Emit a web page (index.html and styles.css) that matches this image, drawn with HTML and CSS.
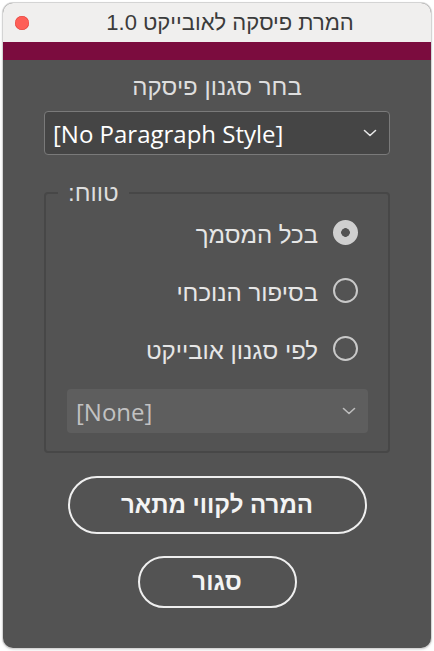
FILE: index.html
```html
<!DOCTYPE html>
<html lang="he" dir="rtl">
<head>
<meta charset="utf-8">
<title>המרת פיסקה לאובייקט 1.0</title>
<link rel="stylesheet" href="styles.css">
</head>
<body>
<div class="window">
  <div class="titlebar">
    <div class="lights"><span class="close"></span></div>
    <div class="title">המרת פיסקה לאובייקט 1.0</div>
  </div>
  <div class="accent"></div>
  <div class="content">
    <div class="heading">בחר סגנון פיסקה</div>
    <div class="select main-select">
      <span class="select-text">[No Paragraph Style]</span>
      <svg class="chev" width="14" height="8" viewBox="0 0 14 8"><path d="M1.5 1.5 L7 6.5 L12.5 1.5" fill="none" stroke="#e6e6e6" stroke-width="1.6" stroke-linecap="round" stroke-linejoin="round"/></svg>
    </div>
    <fieldset class="group">
      <legend class="legend">טווח:</legend>
      <div class="group-body">
        <label class="radio-row"><span class="radio checked"></span><span class="radio-label">בכל המסמך</span></label>
        <label class="radio-row"><span class="radio"></span><span class="radio-label">בסיפור הנוכחי</span></label>
        <label class="radio-row"><span class="radio"></span><span class="radio-label">לפי סגנון אובייקט</span></label>
        <div class="select sub-select">
          <span class="select-text">[None]</span>
          <svg class="chev" width="14" height="8" viewBox="0 0 14 8"><path d="M1.5 1.5 L7 6.5 L12.5 1.5" fill="none" stroke="#bdbdbd" stroke-width="1.6" stroke-linecap="round" stroke-linejoin="round"/></svg>
        </div>
      </div>
    </fieldset>
    <div class="buttons">
      <button class="btn btn-wide">המרה לקווי מתאר</button>
      <button class="btn btn-small">סגור</button>
    </div>
  </div>
</div>
</body>
</html>
```

FILE: styles.css
```css
html, body {
  margin: 0;
  padding: 0;
  background: #ffffff;
}

body {
  font-family: "Liberation Sans", "DejaVu Sans", sans-serif;
  width: 434px;
  height: 651px;
  overflow: hidden;
}

.window {
  margin: 3px;
  width: 428px;
  height: 645px;
  border-radius: 10px;
  overflow: hidden;
  background: #535353;
  display: flex;
  flex-direction: column;
  box-shadow: 0 0 0 1px #d4d4d4, 0 1px 3px rgba(0,0,0,0.25);
}

.titlebar {
  direction: ltr;
  height: 39px;
  background: #f0efee;
  display: grid;
  grid-template-columns: 26px 1fr;
  align-items: center;
}

.lights {
  display: flex;
  align-items: center;
  padding-left: 12px;
}

.close {
  flex: none;
  width: 14px;
  height: 14px;
  border-radius: 50%;
  background: #fe5f57;
  box-shadow: inset 0 0 0 0.5px #e0443e;
}

.title {
  direction: rtl;
  text-align: center;
  font-size: 22px;
  color: #3b3b3b;
  padding-top: 1px;
}

.accent {
  height: 18px;
  background: #7b0c3e;
}

.content {
  padding: 15px 41px 0;
  display: flex;
  flex-direction: column;
}

.heading {
  text-align: center;
  font-size: 24px;
  line-height: 24px;
  color: #dedede;
}

.select {
  direction: ltr;
  display: flex;
  align-items: center;
  justify-content: space-between;
  box-sizing: border-box;
  height: 44px;
  border-radius: 4px;
}

.main-select {
  margin-top: 12px;
  background: #454545;
  border: 1.5px solid #7a7a7a;
  padding: 0 12px 0 8px;
}

.select-text {
  font-family: "Open Sans", "Liberation Sans", sans-serif;
  font-size: 24px;
  color: #ffffff;
}

.group {
  direction: ltr;
  margin: 28px 0 0;
  padding: 0;
  border: 2px solid #474747;
  border-radius: 4px;
}

.legend {
  direction: rtl;
  margin-left: 12px;
  padding: 0 10px;
  font-size: 24px;
  line-height: 20px;
  color: #dedede;
}

.group-body {
  direction: rtl;
  display: flex;
  flex-direction: column;
  padding: 0 0 18px;
}

.radio-row {
  display: flex;
  align-items: center;
  gap: 15px;
  height: 58px;
  padding-right: 30px;
}

.radio {
  box-sizing: border-box;
  width: 25px;
  height: 25px;
  border-radius: 50%;
  border: 2px solid #c9c9c9;
  flex: none;
}

.radio.checked {
  background: radial-gradient(circle, #535353 0 4px, #cfcfcf 4.6px);
  border-color: #cfcfcf;
}

.radio-label {
  font-size: 24px;
  color: #e6e6e6;
  padding-top: 5px;
}

.sub-select {
  margin: 12px 20px 0 21px;
  background: #5e5e5e;
  padding: 0 12px 0 9px;
}

.sub-select .select-text {
  color: #c2c2c2;
}

.buttons {
  display: flex;
  flex-direction: column;
  align-items: center;
  gap: 22px;
  margin-top: 23px;
}

.btn {
  font-family: "Liberation Sans", "DejaVu Sans", sans-serif;
  font-size: 24px;
  font-weight: bold;
  color: #f4f4f4;
  background: transparent;
  border: 2px solid #efefef;
  border-radius: 30px;
  box-sizing: border-box;
}

.btn-wide {
  width: 299px;
  height: 58px;
}

.btn-small {
  width: 159px;
  height: 52px;
}
```
